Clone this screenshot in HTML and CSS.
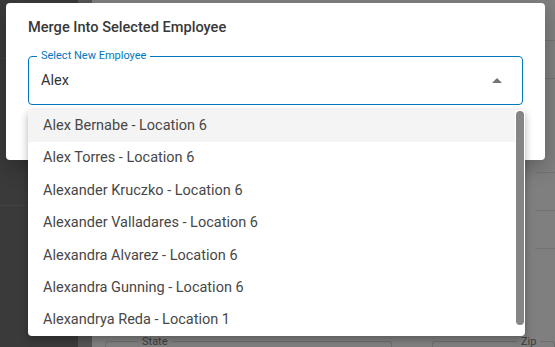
FILE: index.html
```html
<!DOCTYPE html>
<html lang="en-US">
  <head>
    <meta charset="utf-8" />
    <meta name="viewport" content="width=device-width" />
    <title>Merge Into Selected Employee</title>
    <link rel="stylesheet" href="styles.css">
  </head>
  <body>
    <div class="page">
      <div class="sidebar">
        <div class="side-line"></div>
        <div class="side-line"></div>
      </div>
      <div class="gutter"></div>
      <div class="main">
        <div class="main-top">
          <span class="col-line"></span>
          <span class="col-line"></span>
        </div>
        <div class="row-lines">
          <div class="row-line"></div>
          <div class="row-line"></div>
          <div class="row-line"></div>
          <div class="row-line"></div>
          <div class="row-line"></div>
        </div>
        <div class="bottom-fields">
          <div class="ghost-field wide"><span>State</span></div>
          <div class="ghost-field"><span>Zip</span></div>
        </div>
      </div>
    </div>

    <div class="dialog">
      <h2 class="dialog-title">Merge Into Selected Employee</h2>
      <div class="field">
        <span class="field-label">Select New Employee</span>
        <span class="field-value">Alex</span>
        <svg class="field-arrow" width="10" height="5" viewBox="0 0 10 5">
          <path d="M0 5 L5 0 L10 5 Z" fill="#757575" />
        </svg>
      </div>
    </div>

    <div class="menu">
      <ul class="options">
        <li class="option active">Alex Bernabe - Location 6</li>
        <li class="option">Alex Torres - Location 6</li>
        <li class="option">Alexander Kruczko - Location 6</li>
        <li class="option">Alexander Valladares - Location 6</li>
        <li class="option">Alexandra Alvarez - Location 6</li>
        <li class="option">Alexandra Gunning - Location 6</li>
        <li class="option">Alexandrya Reda - Location 1</li>
      </ul>
      <div class="scroll-thumb"></div>
    </div>
  </body>
</html>
```
FILE: styles.css
```css
html {
  font-family: Roboto, "Liberation Sans", sans-serif;
}

body {
  margin: 0;
  width: 555px;
  height: 347px;
  overflow: hidden;
  position: relative;
}

/* page behind the backdrop */
.page {
  display: flex;
  height: 347px;
}

.sidebar {
  width: 78px;
  background: #3a3a3a;
  padding-top: 58px;
}

.side-line {
  height: 1px;
  background: #424242;
  margin-bottom: 146px;
}

.gutter {
  width: 14px;
  background: #545454;
}

.main {
  flex: 1;
  background: #7f7f7f;
  display: flex;
  flex-direction: column;
}

.main-top {
  height: 4px;
  position: relative;
}

.col-line {
  display: inline-block;
  width: 1px;
  height: 4px;
  background: #6c6c6c;
  margin-left: 292px;
}

.col-line + .col-line {
  margin-left: 51px;
}

.row-lines {
  flex: 1;
  display: flex;
  flex-direction: column;
  align-items: flex-end;
  padding-top: 36px;
  gap: 37px;
}

.row-line {
  width: 20px;
  height: 1px;
  background: #727272;
}

.row-line:nth-child(3) {
  margin-top: 56px;
}

.bottom-fields {
  display: flex;
  gap: 40px;
  padding-left: 13px;
  height: 6px;
}

.ghost-field {
  flex: 1;
  border: 1px solid #6e6e6e;
  border-bottom: none;
  border-radius: 3px 3px 0 0;
  position: relative;
}

.ghost-field.wide {
  flex: 0 0 285px;
}

.ghost-field span {
  position: absolute;
  top: -7px;
  left: 32px;
  background: #7f7f7f;
  padding: 0 4px;
  font-size: 11px;
  color: #3c3c3c;
}

.ghost-field:last-child span {
  left: 84px;
}

/* dialog */
.dialog {
  position: absolute;
  left: 6px;
  top: 3px;
  width: 539px;
  height: 157px;
  box-sizing: border-box;
  background: #fff;
  border-radius: 4px;
  padding: 13px 22px 0;
  box-shadow: 0 8px 20px rgba(0, 0, 0, 0.25);
}

.dialog-title {
  margin: 0 0 18px;
  font-size: 14.6px;
  font-weight: 500;
  color: #383838;
  line-height: 22px;
}

.field {
  position: relative;
  height: 49px;
  box-sizing: border-box;
  border: 1px solid #0277bd;
  border-radius: 4px;
  width: 495px;
  display: flex;
  align-items: center;
  padding: 0 12px;
}

.field-label {
  position: absolute;
  top: -8px;
  left: 8px;
  padding: 0 4px;
  background: #fff;
  font-size: 11px;
  line-height: 14px;
  color: #0277bd;
}

.field-value {
  flex: 1;
  font-size: 14.5px;
  color: #333;
}

.field-arrow {
  margin-right: 8px;
}

/* dropdown list */
.menu {
  position: absolute;
  left: 28px;
  top: 110px;
  width: 497px;
  height: 226px;
  background: #fff;
  border-radius: 4px;
  overflow: hidden;
  box-shadow: 0 3px 8px rgba(0, 0, 0, 0.3);
}

.options {
  list-style: none;
  margin: 0;
  padding: 0;
  width: 487px;
}

.option {
  height: 32.4px;
  line-height: 32.4px;
  padding-left: 15px;
  font-size: 14.5px;
  color: #474747;
}

.option.active {
  background: #f4f4f4;
}

.scroll-thumb {
  position: absolute;
  right: 1px;
  top: 1px;
  width: 8px;
  height: 214px;
  border-radius: 4px;
  background: #858585;
}
```
